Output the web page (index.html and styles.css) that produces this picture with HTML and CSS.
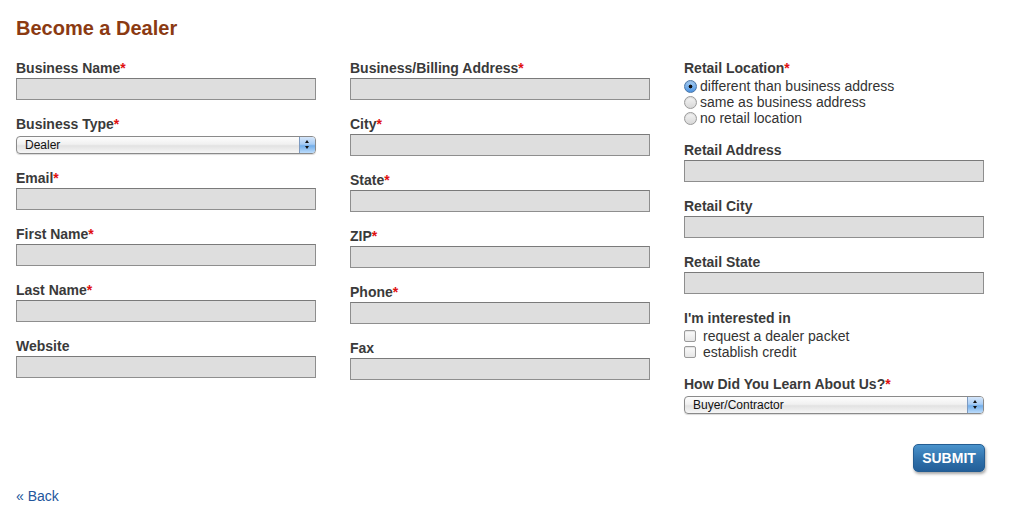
FILE: index.html
```html
<!DOCTYPE html>
<html lang="en">
<head>
    <meta charset="UTF-8">
    <meta name="viewport" content="width=device-width, initial-scale=1.0">
    <title>Become a Dealer</title>
    <link rel="stylesheet" href="styles.css">
</head>
<body>
    <h1>Become a Dealer</h1>
    <form id="dealerForm" class="dealer-form">
        <div class="col">
            <div class="field">
                <label for="bizName">Business Name<span class="req">*</span></label>
                <input type="text" id="bizName" name="bizName">
            </div>
            <div class="field">
                <label for="bizType">Business Type<span class="req">*</span></label>
                <div class="select">
                    <select id="bizType" name="bizType">
                        <option>Dealer</option>
                        <option>Distributor</option>
                        <option>Contractor</option>
                    </select>
                    <span class="stepper"><i class="up"></i><i class="down"></i></span>
                </div>
            </div>
            <div class="field">
                <label for="email">Email<span class="req">*</span></label>
                <input type="text" id="email" name="email">
            </div>
            <div class="field">
                <label for="firstName">First Name<span class="req">*</span></label>
                <input type="text" id="firstName" name="firstName">
            </div>
            <div class="field">
                <label for="lastName">Last Name<span class="req">*</span></label>
                <input type="text" id="lastName" name="lastName">
            </div>
            <div class="field">
                <label for="website">Website</label>
                <input type="text" id="website" name="website">
            </div>
        </div>

        <div class="col">
            <div class="field">
                <label for="address">Business/Billing Address<span class="req">*</span></label>
                <input type="text" id="address" name="address">
            </div>
            <div class="field">
                <label for="city">City<span class="req">*</span></label>
                <input type="text" id="city" name="city">
            </div>
            <div class="field">
                <label for="state">State<span class="req">*</span></label>
                <input type="text" id="state" name="state">
            </div>
            <div class="field">
                <label for="zip">ZIP<span class="req">*</span></label>
                <input type="text" id="zip" name="zip">
            </div>
            <div class="field">
                <label for="phone">Phone<span class="req">*</span></label>
                <input type="text" id="phone" name="phone">
            </div>
            <div class="field">
                <label for="fax">Fax</label>
                <input type="text" id="fax" name="fax">
            </div>
        </div>

        <div class="col">
            <div class="field">
                <label>Retail Location<span class="req">*</span></label>
                <label class="option"><input type="radio" name="retail" value="different" checked> different than business address</label>
                <label class="option"><input type="radio" name="retail" value="same"> same as business address</label>
                <label class="option"><input type="radio" name="retail" value="none"> no retail location</label>
            </div>
            <div class="field">
                <label for="retailAddress">Retail Address</label>
                <input type="text" id="retailAddress" name="retailAddress">
            </div>
            <div class="field">
                <label for="retailCity">Retail City</label>
                <input type="text" id="retailCity" name="retailCity">
            </div>
            <div class="field">
                <label for="retailState">Retail State</label>
                <input type="text" id="retailState" name="retailState">
            </div>
            <div class="field">
                <label>I'm interested in</label>
                <label class="option check"><input type="checkbox" name="packet"> request a dealer packet</label>
                <label class="option check"><input type="checkbox" name="credit"> establish credit</label>
            </div>
            <div class="field">
                <label for="learned">How Did You Learn About Us?<span class="req">*</span></label>
                <div class="select">
                    <select id="learned" name="learned">
                        <option>Buyer/Contractor</option>
                        <option>Trade Show</option>
                        <option>Web Search</option>
                    </select>
                    <span class="stepper"><i class="up"></i><i class="down"></i></span>
                </div>
            </div>
            <div class="actions">
                <button type="submit">SUBMIT</button>
            </div>
        </div>
    </form>

    <p class="back"><a href="#">&laquo; Back</a></p>
</body>
</html>
```

FILE: styles.css
```css
body {
    margin: 0;
    padding: 16px 16px;
    background-color: #fff;
    color: #3a3a3a;
    font-family: "Liberation Sans", Arial, sans-serif;
    font-size: 14px;
}

h1 {
    margin: 0 0 19px;
    font-size: 20px;
    line-height: 24px;
    color: #8b3a12;
}

.dealer-form {
    display: grid;
    grid-template-columns: 300px 300px 300px;
    column-gap: 34px;
    align-items: start;
}

.field {
    margin-bottom: 15px;
}

.field label {
    display: block;
    font-weight: bold;
    line-height: 19px;
}

.req {
    color: #e01010;
}

input[type="text"] {
    display: block;
    box-sizing: border-box;
    width: 300px;
    height: 22px;
    margin: 0;
    padding: 2px 4px;
    background-color: #dedede;
    border: 1px solid #8e8e8e;
    border-top-color: #7a7a7a;
    font-family: inherit;
    font-size: 13px;
}

/* aqua style popup */
.select {
    position: relative;
    width: 300px;
    height: 18px;
    margin-top: 2px;
}

.select select {
    -webkit-appearance: none;
    appearance: none;
    box-sizing: border-box;
    width: 100%;
    height: 18px;
    margin: 0;
    padding: 0 20px 0 8px;
    border: 1px solid #8a8a8a;
    border-radius: 4px;
    background: linear-gradient(#fdfdfd 0%, #f1f1f1 45%, #e2e2e2 55%, #f6f6f6 100%);
    box-shadow: 0 1px 1px rgba(0, 0, 0, 0.15);
    color: #111;
    font-family: "Liberation Sans", Arial, sans-serif;
    font-size: 12px;
    line-height: 16px;
}

.stepper {
    position: absolute;
    top: 1px;
    right: 1px;
    width: 15px;
    height: 16px;
    border-left: 1px solid #7d9ac0;
    border-radius: 0 3px 3px 0;
    background: linear-gradient(#d5e6fa 0%, #a8cdf5 45%, #73aeea 55%, #bcdcfb 100%);
    pointer-events: none;
}

.stepper i {
    position: absolute;
    left: 5px;
    width: 0;
    height: 0;
    border-left: 2.5px solid transparent;
    border-right: 2.5px solid transparent;
}

.stepper .up {
    top: 3px;
    border-bottom: 3px solid #111;
}

.stepper .down {
    top: 9px;
    border-top: 3px solid #111;
}

.field label.option {
    display: flex;
    align-items: center;
    font-weight: normal;
    line-height: 16px;
    color: #333;
}

.option input {
    -webkit-appearance: none;
    appearance: none;
    box-sizing: border-box;
    flex: none;
    width: 13px;
    height: 13px;
    margin: 0 3px 0 0;
    border: 1px solid #9a9a9a;
    border-radius: 50%;
    background: linear-gradient(#f4f4f4, #d8d8d8);
    box-shadow: inset 0 1px 1px rgba(0, 0, 0, 0.1);
}

.option input:checked {
    border-color: #4a76a8;
    background: radial-gradient(circle, #111 0, #111 1.6px, transparent 2.2px),
        linear-gradient(#a9d0f6, #4d93e0);
}

.option.check input {
    width: 12px;
    height: 12px;
    margin-right: 7px;
    border-radius: 2px;
    background: linear-gradient(#fbfbfb, #e6e6e6);
}

.actions {
    margin-top: 30px;
    text-align: right;
}

button {
    width: 72px;
    height: 28px;
    margin-right: -1px;
    padding: 0;
    border: 1px solid #245d92;
    border-radius: 5px;
    background: linear-gradient(#4a93cc, #2e6ea8 60%, #235f99);
    box-shadow: 1px 2px 3px rgba(0, 0, 0, 0.35);
    color: #fff;
    font-family: inherit;
    font-size: 14px;
    font-weight: bold;
    cursor: pointer;
}

.back {
    margin: 15px 0 0;
    line-height: 18px;
}

.back a {
    color: #23569c;
    text-decoration: none;
}
```
